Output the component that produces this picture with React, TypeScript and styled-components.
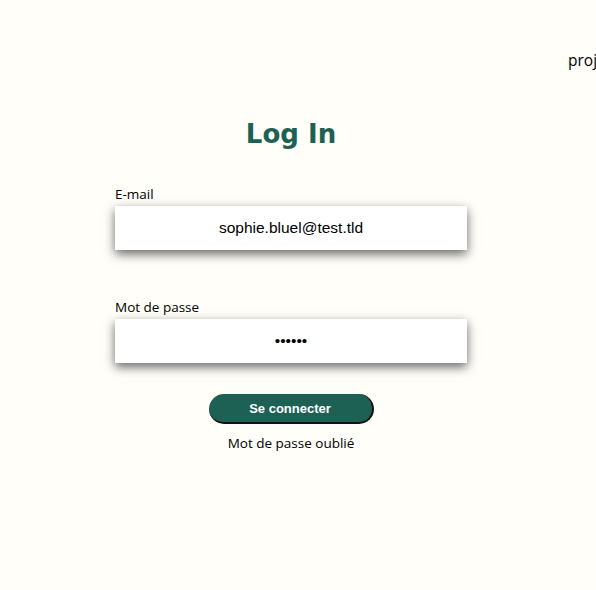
import React from "react";
import styled, { createGlobalStyle } from "styled-components";

const Global = createGlobalStyle`
  html, body { margin: 0; padding: 0; background: #FFFEF8; overflow: hidden; }
  body { font-family: "Open Sans", sans-serif; color: #000; }
`;

const Page = styled.div`
  width: 596px;
  height: 590px;
  overflow: hidden;
`;

const Header = styled.header`
  display: flex;
  padding: 49px 0 0 568px;
  height: 21px;
  white-space: nowrap;
`;

const NavItem = styled.span`
  font-family: "Open Sans", sans-serif;
  font-size: 15.5px;
  color: #000;
`;

const Main = styled.main`
  width: 352px;
  margin-left: 115px;
  display: flex;
  flex-direction: column;
`;

const Title = styled.h2`
  margin: 48px 0 0;
  font-family: "DejaVu Sans", sans-serif;
  font-weight: 700;
  font-size: 26px;
  color: #1d6154;
  text-align: center;
  line-height: 32px;
`;

const Form = styled.form`
  display: flex;
  flex-direction: column;
  margin-top: 36px;
`;

const Label = styled.label<{ $gap: number }>`
  font-family: "Open Sans", sans-serif;
  font-size: 13.5px;
  line-height: 17px;
  margin-top: ${(p) => p.$gap}px;
  margin-bottom: 3px;
`;

const Input = styled.input`
  box-sizing: border-box;
  width: 352px;
  height: 44px;
  border: none;
  outline: none;
  background: #fff;
  box-shadow: 0px 4px 10px rgba(0, 0, 0, 0.6);
  text-align: center;
  font-family: "Liberation Sans", Arial, sans-serif;
  font-size: 15.5px;
  color: #000;
`;

const Button = styled.button`
  align-self: center;
  margin-top: 31px;
  width: 165px;
  height: 30px;
  border-radius: 15px;
  border: none;
  border-right: 2px solid #111;
  border-bottom: 2px solid #111;
  background: #1d6154;
  color: #fff;
  font-family: "Liberation Sans", Arial, sans-serif;
  font-weight: 700;
  font-size: 13px;
  padding: 0;
`;

const Forgot = styled.a`
  align-self: center;
  margin-top: 10px;
  font-family: "Open Sans", sans-serif;
  font-size: 13.5px;
  color: #000;
  text-decoration: none;
`;

export default function App() {
  return (
    <Page>
      <Global />
      <Header>
        <NavItem>projets</NavItem>
      </Header>
      <Main>
        <Title>Log In</Title>
        <Form onSubmit={(e) => e.preventDefault()}>
          <Label $gap={0} htmlFor="email">E-mail</Label>
          <Input id="email" type="email" defaultValue="sophie.bluel@test.tld" />
          <Label $gap={49} htmlFor="pw">Mot de passe</Label>
          <Input id="pw" type="password" defaultValue="azerty" />
          <Button type="submit">Se connecter</Button>
          <Forgot href="#">Mot de passe oublié</Forgot>
        </Form>
      </Main>
    </Page>
  );
}
